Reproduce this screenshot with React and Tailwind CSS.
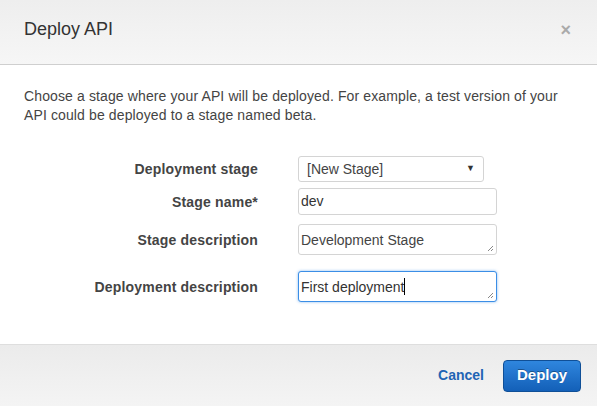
import React from "react";

const font = { fontFamily: '"Liberation Sans", Arial, sans-serif' };

const Row = ({ label, children, className = "" }) => (
  <div className={`flex items-center ${className}`}>
    <div className="w-[258px] shrink-0 text-right text-[14px] leading-[18px] font-bold tracking-[0.18px] text-[#444]">{label}</div>
    <div className="ml-[40px]">{children}</div>
  </div>
);

const Grip = () => (
  <svg className="absolute bottom-[2px] right-[2px]" width="7" height="7" viewBox="0 0 7 7">
    <path d="M6 1L1 6M6 4L4 6" stroke="#888" strokeWidth="1" />
  </svg>
);

export default function App() {
  return (
    <div className="w-[597px] h-[406px] flex flex-col bg-white text-[#333]" style={font}>
      <div className="h-[65px] shrink-0 flex items-center justify-between pl-[24px] pr-[26px] bg-gradient-to-b from-[#eeeeee] to-[#f6f6f6] border-b border-[#cfcfcf]">
        <span className="text-[18px] text-[#333] -mt-[6px]">Deploy API</span>
        <span className="text-[18px] font-bold text-[#aaa] -mt-[4px] leading-none">×</span>
      </div>

      <div className="flex-1 pt-[22px]">
        <p className="px-[24px] text-[14px] leading-[19px] tracking-[0.12px] text-[#444]">
          Choose a stage where your API will be deployed. For example, a test version of your API could be deployed to a stage named beta.
        </p>

        <div className="mt-[31px] flex flex-col">
          <Row label="Deployment stage" className="h-[26px]">
            <div className="w-[186px] h-[26px] border border-[#d4d4d4] rounded-[3px] flex items-center justify-between pl-[8px] pr-[8px] text-[14px] text-[#444] bg-white">
              <span>[New Stage]</span>
              <span className="text-[9px] text-[#333]">▼</span>
            </div>
          </Row>
          <Row label="Stage name*" className="mt-[6px] h-[27px]">
            <div className="w-[199px] h-[27px] border border-[#d4d4d4] rounded-[3px] flex items-center pl-[2px] text-[14px] text-[#333] bg-white">
              dev
            </div>
          </Row>
          <Row label="Stage description" className="mt-[9px] h-[31px]">
            <div className="relative w-[199px] h-[31px] border border-[#d4d4d4] rounded-[3px] pl-[2px] pt-[6px] text-[14px] leading-[18px] text-[#444] bg-white">
              Development Stage
              <Grip />
            </div>
          </Row>
          <Row label="Deployment description" className="mt-[16px] h-[31px]">
            <div className="relative w-[199px] h-[31px] border border-[#3b8ee6] rounded-[3px] shadow-[0_0_3px_rgba(59,142,230,0.6)] pl-[2px] pt-[6px] text-[14px] leading-[18px] text-[#333] bg-white flex items-start">
              <span>First deployment</span>
              <span className="w-[1px] h-[17px] bg-black"></span>
              <Grip />
            </div>
          </Row>
        </div>
      </div>

      <div className="h-[62px] shrink-0 border-t border-[#dedede] bg-gradient-to-b from-[#ebebeb] to-[#f4f4f4] flex items-center justify-end pr-[16px] gap-[19px]">
        <span className="text-[14px] font-bold text-[#1f64b4]">Cancel</span>
        <button className="w-[78px] h-[32px] rounded-[4px] border border-[#0f4f97] bg-gradient-to-b from-[#2f86de] to-[#1360b8] text-white text-[15px] font-bold [text-shadow:0_-1px_0_rgba(0,0,0,0.35)]">
          Deploy
        </button>
      </div>
    </div>
  );
}
